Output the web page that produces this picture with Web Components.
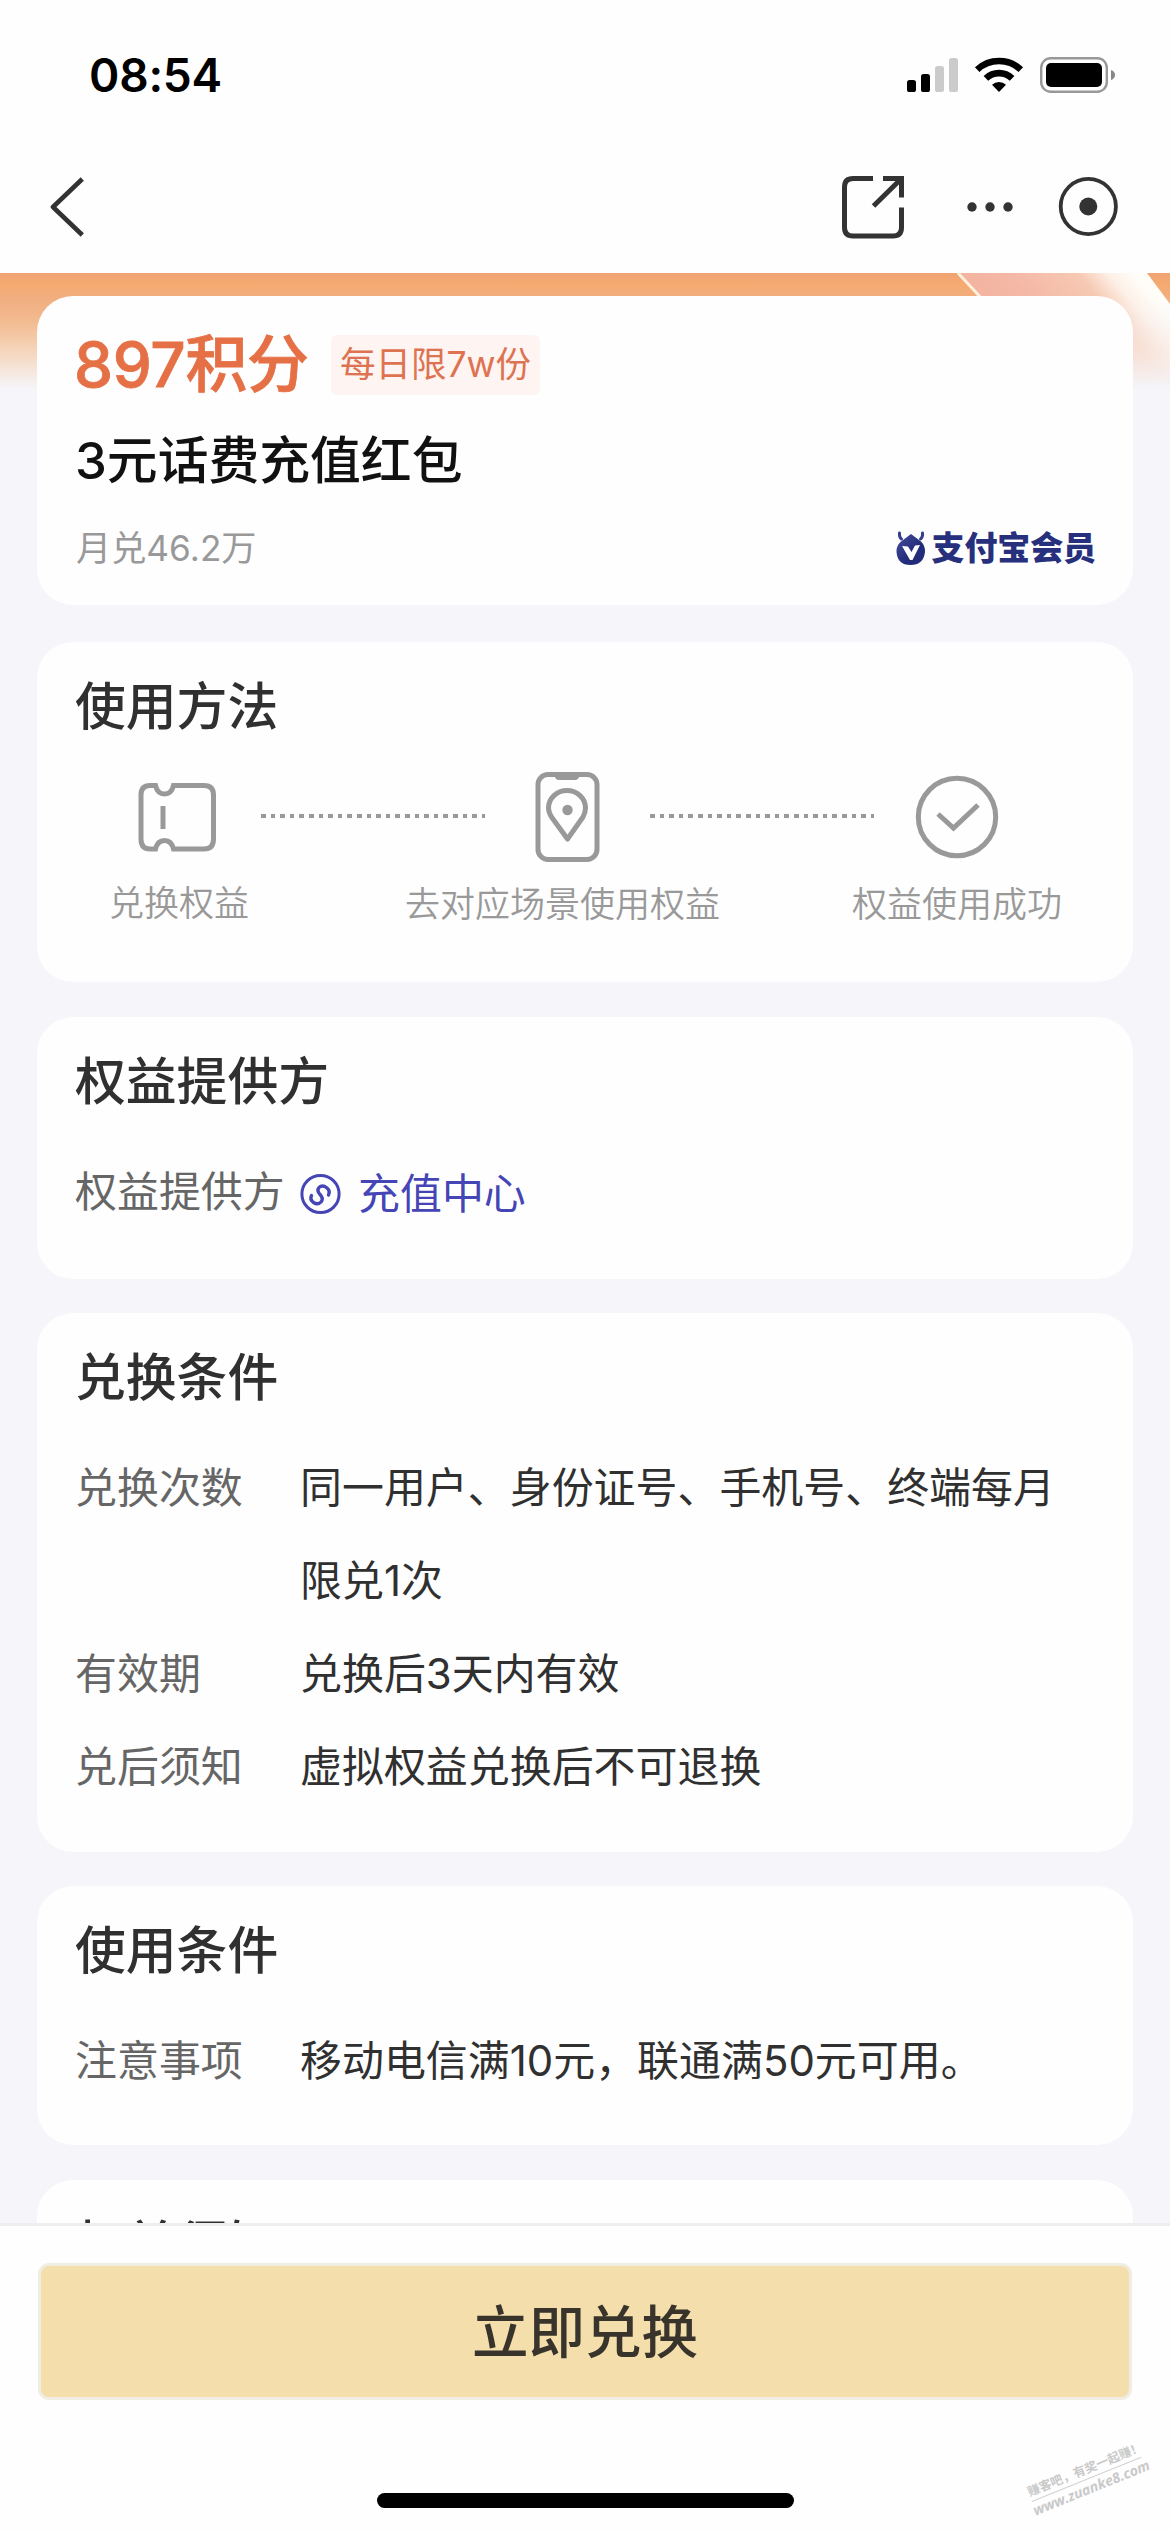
<!DOCTYPE html>
<html lang="zh-CN">
<head>
<meta charset="utf-8">
<title>积分兑换</title>
<style>
html,body{margin:0;padding:0}
body{width:1170px;height:2532px;overflow:hidden;background:#fefefe;font-family:Inter,"Noto Sans CJK SC",sans-serif;color:#333}
</style>
</head>
<body>
<benefit-page></benefit-page>
<script>
const define = (name, html) => customElements.define(name, class extends HTMLElement {
  constructor() {
    super();
    this.attachShadow({ mode: 'open' }).innerHTML = html;
  }
});

define('status-bar', `
<style>
:host{display:flex;height:149px;box-sizing:border-box;justify-content:space-between;align-items:center;padding:0 54px 0 89px;color:#000}
.time{font-size:46px;font-weight:600;line-height:60px;letter-spacing:-.2px}
svg{display:block}
</style>
<span class="time">08:54</span>
<svg width="210" height="38" viewBox="906 55 210 38">
  <rect x="907" y="79" width="9" height="12" rx="2.6"/>
  <rect x="921" y="73" width="9" height="18" rx="2.6"/>
  <rect x="935" y="65" width="9" height="26" rx="2.6" fill="#cbcbcb"/>
  <rect x="949" y="57" width="9" height="34" rx="2.6" fill="#cbcbcb"/>
  <g fill="none" stroke="#000" stroke-width="6.6">
    <path d="M977.2 68.6A32 32 0 0 1 1020.8 68.6"/>
    <path d="M985.9 77.4A19 19 0 0 1 1012.1 77.4"/>
  </g>
  <path d="M999 91L992 83.8A10 10 0 0 1 1006 83.8Z"/>
  <rect x="1041.2" y="57.2" width="65.6" height="33.6" rx="9.5" fill="none" stroke="#989898" stroke-width="2.4"/>
  <rect x="1046" y="62" width="56" height="24" rx="5"/>
  <path d="M1111 69Q1115 70.4 1115 74T1111 79Z" fill="#888"/>
</svg>`);

define('nav-bar', `
<style>
:host{display:flex;height:124px;box-sizing:border-box;justify-content:space-between;align-items:flex-start;padding:27px 51px 0 50px}
svg{display:block;fill:none;stroke:#333}
</style>
<svg width="35" height="62" viewBox="50 176 35 62"><path stroke-width="4.6" d="M82.3 179L53 207L82.3 235" stroke-linejoin="round"/></svg>
<svg width="277" height="63" viewBox="842 176 277 63">
  <path stroke-width="5" d="M873 178.5H853Q844.5 178.5 844.5 187V227.500Q844.5 236 853 236H893Q901.500 236 901.500 227.500V207.500M883 178.500H901.500V197.500M901.500 178.500L873.500 206"/>
  <g fill="#333" stroke="none"><circle cx="972" cy="207" r="4.7"/><circle cx="990" cy="207" r="4.7"/><circle cx="1008" cy="207" r="4.7"/><circle cx="1088.300" cy="206.500" r="9"/></g>
  <circle cx="1088.300" cy="206.500" r="27.600" stroke-width="3.800"/>
</svg>`);

define('hero-glow', `
<style>:host{display:block}svg{display:block}</style>
<svg width="1170" height="116" viewBox="0 0 1170 116">
  <defs>
    <linearGradient id="o" x1="0" y1="0" x2="0" y2="1">
      <stop offset="0" stop-color="#f0a373"/><stop offset=".1" stop-color="#f5aa70"/><stop offset=".22" stop-color="#f1ae80"/>
      <stop offset=".42" stop-color="#f3bb90"/><stop offset=".65" stop-color="#f5d3b7"/><stop offset=".85" stop-color="#f5e7de"/><stop offset="1" stop-color="#f5f5fa"/>
    </linearGradient>
    <linearGradient id="p" gradientUnits="userSpaceOnUse" x1="958" y1="0" x2="1064" y2="-86">
      <stop offset="0" stop-color="#f3b49f"/><stop offset=".3" stop-color="#f4b8a6"/><stop offset=".68" stop-color="#f6c9b3"/><stop offset=".86" stop-color="#fdf1e8"/><stop offset="1" stop-color="#fffdf8"/>
    </linearGradient>
    <linearGradient id="f" x1="0" y1="0" x2="0" y2="1">
      <stop offset=".2" stop-color="#f5f5fa" stop-opacity="0"/><stop offset=".65" stop-color="#f8eee9" stop-opacity=".62"/><stop offset="1" stop-color="#f5f5fa"/>
    </linearGradient>
  </defs>
  <rect width="1170" height="116" fill="url(#o)"/>
  <path d="M958 0H1147L1170 31V116H1070Z" fill="url(#p)"/>
  <path d="M958 0H1170V116H1070Z" fill="url(#f)"/>
  <path d="M958 0L984 28" stroke="#fff0df" stroke-width="3"/>
</svg>`);

define('info-card', `
<style>
:host{display:block;box-sizing:border-box;background:#fefefe;border-radius:36px;padding:35px 38px 0;margin-bottom:35px}
h2{margin:0;font-size:50.800px;font-weight:500;line-height:60px;color:#303030}
</style>
<h2><slot name="title"></slot></h2><slot></slot>`);

define('info-row', `
<style>
:host{display:flex;font-size:41.950px;line-height:93px;color:#303030}
.label{flex:none;width:225px;color:#666;white-space:nowrap}
.value{white-space:nowrap}
</style>
<div class="label"><slot name="label"></slot></div><div class="value"><slot></slot></div>`);

define('member-logo', `
<style>
:host{display:flex;align-items:center;gap:5px;color:#27307c;font:900 33px/40px "Noto Sans CJK SC",sans-serif;margin-right:-1px}
svg{display:block}
span{letter-spacing:-.1px;margin-top:-5px}
</style>
<svg width="30" height="36" viewBox="0 0 30 36">
  <defs><linearGradient id="g" x1="0" y1="0" x2="1" y2="1"><stop offset="0" stop-color="#4550a0"/><stop offset=".6" stop-color="#232c78"/></linearGradient></defs>
  <path d="M15 4L25 11.500Q29.500 16 29 22Q27.500 35 14.500 35Q1.500 35 .500 22Q0 16 5 11.500Z" fill="url(#g)"/>
  <path d="M5.500 9Q3 7.500 3.500 3M24.500 9Q27 7.500 26.500 3" fill="none" stroke="#343e8c" stroke-width="3" stroke-linecap="round"/>
  <path d="M6 16L12 16.500L15.500 22L19 15.500L24 15L16.500 30H14Z" fill="#fff"/>
</svg><span>支付宝会员</span>`);

define('product-card', `
<style>
:host{display:block;box-sizing:border-box;height:309px;background:#fefefe;border-radius:36px;padding:33px 38px 0;margin-bottom:37px}
.top{display:flex;align-items:center;height:72px}
.points{width:235px;font-size:62px;font-weight:500;line-height:72px;color:#e67046;white-space:nowrap;-webkit-text-stroke:.8px #e67046;letter-spacing:-.3px;text-indent:-1px}
.badge{margin-left:21px;width:209px;height:60px;border-radius:6px;background:#fef4f2;color:#dd7350;font-size:35.500px;line-height:60px;text-align:center;white-space:nowrap}
h1{margin:28px 0 0;font-size:50.800px;font-weight:500;line-height:64px;color:#111}
.foot{display:flex;justify-content:space-between;align-items:center;height:50px;margin-top:30px}
.sold{font-size:35.200px;line-height:50px;color:#999;padding-left:1px}
</style>
<div class="top"><div class="points"><slot name="points"></slot></div><div class="badge"><slot name="badge"></slot></div></div>
<h1><slot></slot></h1>
<div class="foot"><span class="sold"><slot name="sold"></slot></span><member-logo></member-logo></div>`);

define('step-flow', `
<style>
:host{display:block;color:#999;margin-left:-38px}
.icons{display:flex;align-items:center;height:92px;margin-top:34px;padding-left:101px}
svg{display:block;flex:none;fill:none;stroke:#999;stroke-width:5}
.dots{flex:none;width:224px;height:4px;margin-top:-2px;background:repeating-linear-gradient(90deg,#999 0 4.600px,transparent 4.600px 9.600px)}
.labels{display:flex;font-size:35px;font-weight:350;line-height:40px;white-space:nowrap;padding-left:72px;margin-top:21px}
.labels span{flex:none}
.labels .first{margin-top:-1px}
</style>
<div class="icons">
  <svg width="80" height="70" viewBox="0 0 80 70"><path stroke-linejoin="miter" d="M17.500 3.500H12Q3 3.500 3 13V57Q3 67 12 67H17.500Q19.500 58.500 26.500 58.500T35.500 67H66Q75.500 67 75.500 57V13Q75.500 3.500 66 3.500H35.500Q33.500 12 26.500 12T17.500 3.500ZM25 24V47"/></svg>
  <div class="dots" style="margin-left:43px"></div>
  <svg style="margin-left:50px" width="65" height="92" viewBox="0 0 65 92"><rect x="3" y="3.500" width="59" height="85" rx="10"/><path fill="#999" stroke="none" d="M19 3H45Q44 9 40 9H24Q20 9 19 3Z"/><path stroke-linejoin="round" d="M32.500 68L16.500 46Q13.500 41 13.500 37A18.500 17.500 0 0 1 50.500 37Q50.500 41 48 46Z"/><circle cx="32.500" cy="39" r="5.200" fill="#999" stroke="none"/></svg>
  <div class="dots" style="margin-left:50px"></div>
  <svg style="margin-left:41px" width="84" height="84" viewBox="0 0 84 84"><circle cx="42" cy="42" r="38.700"/><path d="M23 39L38.500 53L63 30" stroke-linejoin="miter"/></svg>
</div>
<div class="labels"><span class="first" style="width:296px"><slot name="a"></slot></span><span style="width:447px"><slot name="b"></slot></span><span><slot name="c"></slot></span></div>`);

define('provider-link', `
<style>
:host{display:flex;align-items:center;color:#4545b5;gap:17px;height:93px;padding-top:4px;box-sizing:border-box}
svg{display:block}
</style>
<svg width="41" height="42" viewBox="0 0 41 42" fill="none" stroke="#4545b5"><circle cx="20.500" cy="21" r="18.600" stroke-width="3"/><path stroke-width="3.400" stroke-linecap="round" d="M11.500 22.500Q9.500 26.500 13.500 29.500Q18 32.500 21.500 28.500Q23.500 25 20 21.500Q16.500 17.500 19 14.500Q22.500 11.500 27 15Q30.500 18 28.500 22"/></svg>
<span><slot></slot></span>`);

define('action-bar', `
<style>
:host{display:flex;flex-direction:column;align-items:center;height:309px;box-sizing:border-box;background:#fefefe;border-top:3px solid #eee;padding-top:37px}
button{display:block;width:1094px;height:137px;box-sizing:border-box;border:3px solid #f0eee3;border-radius:11px;background:#f4deab;color:#38342c;font:500 56.500px/133px Inter,"Noto Sans CJK SC",sans-serif;padding:0;margin:0}
.home{width:417px;height:15px;border-radius:8px;background:#000;margin-top:93px}
</style>
<button><slot></slot></button><div class="home"></div>`);

define('site-mark', `
<style>
:host{position:absolute;left:1032px;top:2482px;width:120px;transform:rotate(-22deg);transform-origin:0 20px;color:#c9c9c9;white-space:nowrap;font-family:"Open Sans","Noto Sans CJK SC",sans-serif;font-weight:700}
div{font-size:12.300px;line-height:19px;border-bottom:1px solid #d2d2d2;width:118px}
p{margin:0 0 0 -2px;font-size:14.100px;font-style:italic;line-height:17px}
</style>
<div>赚客吧，有奖一起赚！</div><p>www.zuanke8.com</p>`);

define('benefit-page', `
<style>
:host{display:flex;flex-direction:column;position:relative;width:1170px;height:2532px;overflow:hidden;background:#fefefe}
main{display:grid;height:1950px;overflow:hidden;background:#f5f5fa;align-items:start}
hero-glow,.cards{grid-area:1/1}
.cards{padding:23px 37px 0}
</style>
<status-bar></status-bar>
<nav-bar></nav-bar>
<main>
  <hero-glow></hero-glow>
  <div class="cards">
    <product-card><span slot="points">897积分</span><span slot="badge">每日限7w份</span>3元话费充值红包<span slot="sold">月兑46.2万</span></product-card>
    <info-card style="height:340px"><span slot="title">使用方法</span>
      <step-flow><span slot="a">兑换权益</span><span slot="b">去对应场景使用权益</span><span slot="c">权益使用成功</span></step-flow>
    </info-card>
    <info-card style="height:262px;margin-bottom:34px"><span slot="title">权益提供方</span>
      <info-row style="margin-top:33px"><span slot="label">权益提供方</span><provider-link>充值中心</provider-link></info-row>
    </info-card>
    <info-card style="height:539px;margin-bottom:34px"><span slot="title">兑换条件</span>
      <div style="margin-top:33px">
      <info-row><span slot="label">兑换次数</span>同一用户、身份证号、手机号、终端每月<br>限兑1次</info-row>
      <info-row><span slot="label">有效期</span>兑换后3天内有效</info-row>
      <info-row><span slot="label">兑后须知</span>虚拟权益兑换后不可退换</info-row>
      </div>
    </info-card>
    <info-card style="height:259px"><span slot="title">使用条件</span>
      <info-row style="margin-top:33px"><span slot="label">注意事项</span>移动电信满10元，联通满50元可用。</info-row>
    </info-card>
    <info-card style="height:240px;margin:0"><span slot="title">权益须知</span></info-card>
  </div>
</main>
<action-bar>立即兑换</action-bar>
<site-mark></site-mark>`);
</script>
</body>
</html>
